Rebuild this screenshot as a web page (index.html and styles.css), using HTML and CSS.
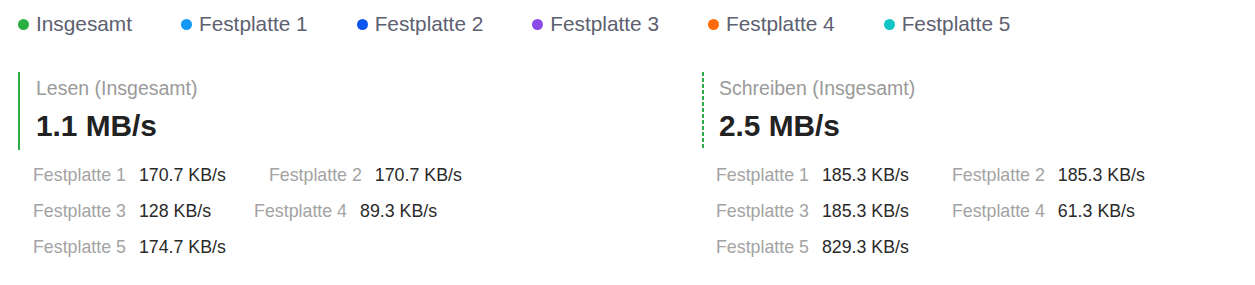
FILE: index.html
```html
<!DOCTYPE html>
<html lang="de">
<head>
<meta charset="utf-8">
<title>Festplatten</title>
<link rel="stylesheet" href="styles.css">
</head>
<body>
<div class="page">
  <div class="legend">
    <div class="legend-item"><span class="dot c0"></span>Insgesamt</div>
    <div class="legend-item"><span class="dot c1"></span>Festplatte 1</div>
    <div class="legend-item"><span class="dot c2"></span>Festplatte 2</div>
    <div class="legend-item"><span class="dot c3"></span>Festplatte 3</div>
    <div class="legend-item"><span class="dot c4"></span>Festplatte 4</div>
    <div class="legend-item"><span class="dot c5"></span>Festplatte 5</div>
  </div>
  <div class="panels">
    <div class="panel">
      <div class="head solid">
        <div class="title">Lesen (Insgesamt)</div>
        <div class="value">1.1 MB/s</div>
      </div>
      <div class="stats">
        <div class="row">
          <div class="stat"><span class="label">Festplatte 1</span><span class="num">170.7 KB/s</span></div>
          <div class="stat"><span class="label">Festplatte 2</span><span class="num">170.7 KB/s</span></div>
        </div>
        <div class="row">
          <div class="stat"><span class="label">Festplatte 3</span><span class="num">128 KB/s</span></div>
          <div class="stat"><span class="label">Festplatte 4</span><span class="num">89.3 KB/s</span></div>
        </div>
        <div class="row">
          <div class="stat"><span class="label">Festplatte 5</span><span class="num">174.7 KB/s</span></div>
        </div>
      </div>
    </div>
    <div class="panel">
      <div class="head dashed">
        <div class="title">Schreiben (Insgesamt)</div>
        <div class="value">2.5 MB/s</div>
      </div>
      <div class="stats">
        <div class="row">
          <div class="stat"><span class="label">Festplatte 1</span><span class="num">185.3 KB/s</span></div>
          <div class="stat"><span class="label">Festplatte 2</span><span class="num">185.3 KB/s</span></div>
        </div>
        <div class="row">
          <div class="stat"><span class="label">Festplatte 3</span><span class="num">185.3 KB/s</span></div>
          <div class="stat"><span class="label">Festplatte 4</span><span class="num">61.3 KB/s</span></div>
        </div>
        <div class="row">
          <div class="stat"><span class="label">Festplatte 5</span><span class="num">829.3 KB/s</span></div>
        </div>
      </div>
    </div>
  </div>
</div>
</body>
</html>
```

FILE: styles.css
```css
* { box-sizing: border-box; }
html, body { margin: 0; padding: 0; background: #fff; }
body { font-family: "Liberation Sans", Arial, sans-serif; }

.page { padding: 12px 0 0 18px; }

.legend { display: flex; gap: 49px; height: 24px; align-items: center; }
.legend-item { display: flex; align-items: center; gap: 7px; font-size: 20.8px; color: #5c6070; line-height: 24px; }
.dot { width: 11px; height: 11px; border-radius: 50%; display: inline-block; }
.c0 { background: #2ab042; }
.c1 { background: #1497f5; }
.c2 { background: #0a55f0; }
.c3 { background: #8a4ae6; }
.c4 { background: #ff6a0a; }
.c5 { background: #12c6c6; }

.panels { display: flex; margin-top: 36px; }
.panel { flex: 0 0 684px; }
.panel + .panel { flex: 1 1 auto; }

.head { padding: 4px 0 6px 16px; height: 78px; }
.head.solid { border-left: 2px solid #2eaa48; }
.head.dashed {
  padding-left: 17px;
  background: repeating-linear-gradient(to bottom, #2eaa48 0 4px, transparent 4px 6px) left top / 2px 100% no-repeat;
}

.title { font-size: 19.5px; color: #9a9a9a; line-height: 24px; }
.value { font-size: 29.8px; font-weight: bold; color: #222; line-height: 36px; margin-top: 8px; }

.stats { padding: 13px 0 0 15px; display: flex; flex-direction: column; gap: 12px; }
.panel + .panel .stats { padding-left: 14px; }
.row { display: flex; gap: 43px; height: 24px; align-items: center; }
.stat { display: flex; gap: 13px; font-size: 17.8px; line-height: 24px; }
.label { color: #a3a3a3; }
.num { color: #2a2a2a; }
```
